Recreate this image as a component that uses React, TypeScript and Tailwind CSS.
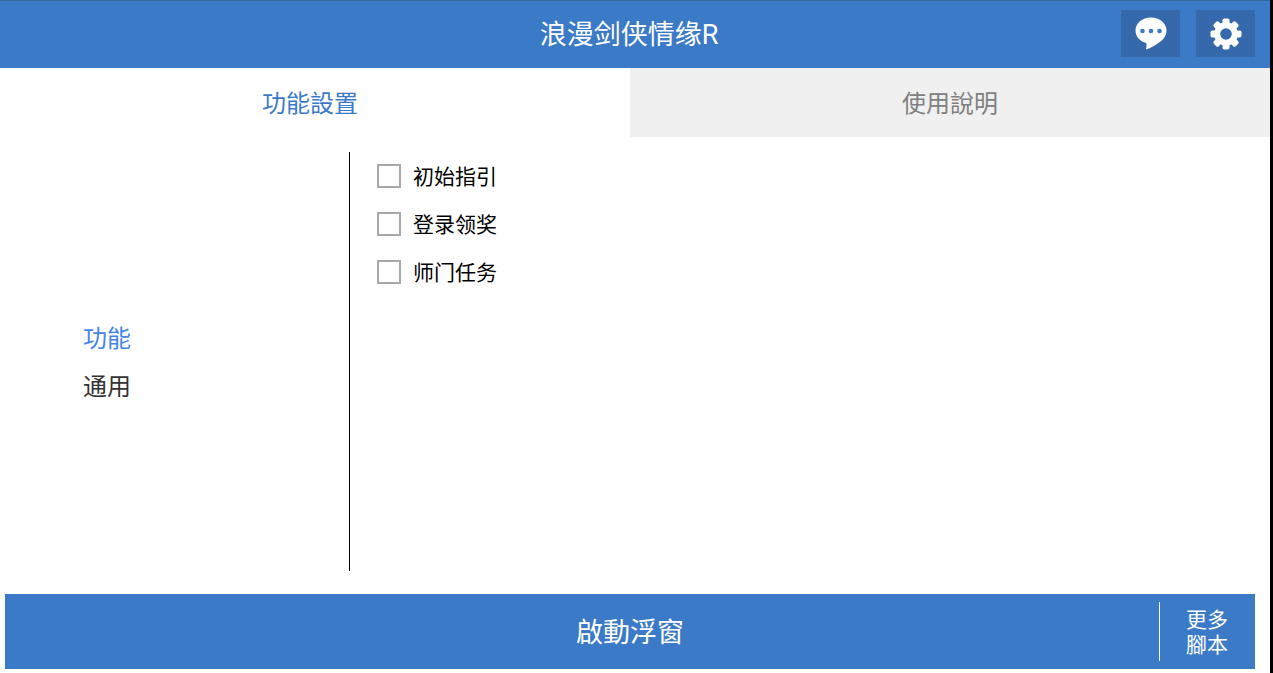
import { useState } from "react";

const font = "font-['Roboto','Noto_Sans_CJK_SC',sans-serif]";

function ChatIcon() {
  return (
    <svg viewBox="0 0 32 33" className="h-[33px] w-[32px]" aria-hidden>
      <path
        d="M16 .5C7.300.5.500 6.300.500 13.500c0 6.300 5.200 11.400 10.700 12.400.6 1.800.5 4.300-.4 6.600 3.800-1.200 9.400-3.900 13.300-7.100C28.500 22.800 31.500 18.500 31.500 13.500 31.500 6.300 24.700.5 16 .5z"
        fill="#fff"
      />
      <circle cx="7.500" cy="14" r="2.300" fill="#3b7ac7" />
      <circle cx="16" cy="14" r="2.300" fill="#3b7ac7" />
      <circle cx="24.500" cy="14" r="2.300" fill="#3b7ac7" />
    </svg>
  );
}

function GearIcon() {
  const angles = [0, 45, 90, 135, 180, 225, 270, 315];
  return (
    <svg viewBox="0 0 32 32" className="h-8 w-8" aria-hidden>
      {angles.map((a) => (
        <rect key={a} x="12.500" y="0.500" width="7" height="8" rx="1.800" fill="#fff" transform={`rotate(${a} 16 16)`} />
      ))}
      <circle cx="16" cy="16" r="8.800" fill="none" stroke="#fff" strokeWidth="6" />
    </svg>
  );
}

function Header() {
  return (
    <header className="relative flex h-[68px] shrink-0 items-center justify-center border-t border-[#33689f] bg-[#3b7ac7]">
      <h1 className="pt-[2px] pr-[12px] text-[27px] font-normal leading-none text-white">浪漫剑侠情缘R</h1>
      <div className="absolute top-[9px] right-[15px] flex gap-4">
        <button className="flex h-[47px] w-[59px] items-center justify-center bg-[#3669ab]">
          <ChatIcon />
        </button>
        <button className="flex h-[47px] w-[59px] items-center justify-center bg-[#3669ab]">
          <GearIcon />
        </button>
      </div>
    </header>
  );
}

function Tabs() {
  return (
    <div className="flex h-[69px] shrink-0 text-2xl">
      <div className="flex w-[630px] items-center justify-center pt-[2px] pr-[10px] text-[#3b7ac7]">功能設置</div>
      <div className="flex flex-1 items-center justify-center bg-[#f0f0f0] pt-[2px] text-[#808080]">使用說明</div>
    </div>
  );
}

const tasks = ["初始指引", "登录领奖", "师门任务"];

export default function App() {
  const [checked, setChecked] = useState<Record<string, boolean>>({});
  return (
    <div className={`flex h-[673px] w-[1273px] overflow-hidden bg-black ${font}`}>
      <main className="flex w-[1270px] flex-col bg-white">
        <Header />
        <Tabs />
        <section className="mt-[15px] flex h-[419px] shrink-0">
          <nav className="flex w-[349px] flex-col justify-center pl-[83px] text-2xl">
            <div className="flex h-12 items-center pt-[2px] text-[#4285e8]">功能</div>
            <div className="flex h-12 items-center pt-[2px] text-[#333]">通用</div>
          </nav>
          <div className="w-px bg-black" />
          <ul className="pl-[27px]">
            {tasks.map((t) => (
              <li key={t} className="flex h-12 items-center gap-3 text-[21px] text-black">
                <button
                  onClick={() => setChecked({ ...checked, [t]: !checked[t] })}
                  className="h-6 w-6 border-2 border-[#a8a8a8] bg-white"
                  aria-pressed={!!checked[t]}
                />
                <span className="pt-[4px]">{t}</span>
              </li>
            ))}
          </ul>
        </section>
        <footer className="mt-[23px] ml-[5px] flex h-[75px] w-[1250px] items-center bg-[#3b7ac7] text-white">
          <div className="flex-1 pt-[4px] pl-[96px] text-center text-[27px]">啟動浮窗</div>
          <div className="flex h-[59px] w-[96px] flex-col items-center justify-center border-l border-white pt-[2px] pr-[1px] text-[21px] leading-[25px]">
            <span>更多</span>
            <span>腳本</span>
          </div>
        </footer>
      </main>
    </div>
  );
}
